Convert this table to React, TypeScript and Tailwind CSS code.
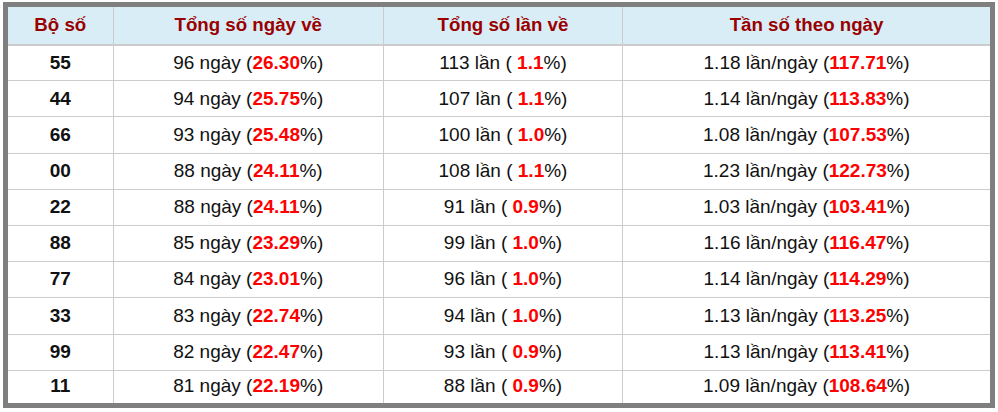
const rows = [
  { so: "55", ngay: "96", pctNgay: "26.30", lan: "113", pctLan: "1.1", tan: "1.18", pctTan: "117.71" },
  { so: "44", ngay: "94", pctNgay: "25.75", lan: "107", pctLan: "1.1", tan: "1.14", pctTan: "113.83" },
  { so: "66", ngay: "93", pctNgay: "25.48", lan: "100", pctLan: "1.0", tan: "1.08", pctTan: "107.53" },
  { so: "00", ngay: "88", pctNgay: "24.11", lan: "108", pctLan: "1.1", tan: "1.23", pctTan: "122.73" },
  { so: "22", ngay: "88", pctNgay: "24.11", lan: "91", pctLan: "0.9", tan: "1.03", pctTan: "103.41" },
  { so: "88", ngay: "85", pctNgay: "23.29", lan: "99", pctLan: "1.0", tan: "1.16", pctTan: "116.47" },
  { so: "77", ngay: "84", pctNgay: "23.01", lan: "96", pctLan: "1.0", tan: "1.14", pctTan: "114.29" },
  { so: "33", ngay: "83", pctNgay: "22.74", lan: "94", pctLan: "1.0", tan: "1.13", pctTan: "113.25" },
  { so: "99", ngay: "82", pctNgay: "22.47", lan: "93", pctLan: "0.9", tan: "1.13", pctTan: "113.41" },
  { so: "11", ngay: "81", pctNgay: "22.19", lan: "88", pctLan: "0.9", tan: "1.09", pctTan: "108.64" },
];

const Red = ({ children }: { children: React.ReactNode }) => (
  <span className="font-bold text-[#ff0000]">{children}</span>
);

export default function App() {
  return (
    <div className="w-[998px] h-[412px] bg-white pt-[2px] pl-[3px] font-['Liberation_Sans',Arial,sans-serif]">
      <table className="w-[992px] table-fixed border-collapse border-[5px] border-[#7f7f7f] text-center">
        <colgroup>
          <col className="w-[107px]" />
          <col className="w-[269px]" />
          <col className="w-[238px]" />
          <col className="w-[368px]" />
        </colgroup>
        <thead>
          <tr className="h-[40px] bg-[#d9edf7] text-[18.7px] font-bold text-[#990000]">
            <th className="border-b-2 border-r border-[#cccccc]">Bộ số</th>
            <th className="border-b-2 border-r border-[#cccccc]">Tổng số ngày về</th>
            <th className="border-b-2 border-r border-[#cccccc]">Tổng số lần về</th>
            <th className="border-b-2 border-[#cccccc]">Tần số theo ngày</th>
          </tr>
        </thead>
        <tbody className="text-[19px] text-[#111111]">
          {rows.map((r, i) => (
            <tr key={r.so} className={i < rows.length - 1 ? "h-[36.2px] border-b border-[#cccccc]" : "h-[35px]"}>
              <td className="border-r border-[#cccccc] font-bold">{r.so}</td>
              <td className="border-r border-[#cccccc]">
                {r.ngay} ngày (<Red>{r.pctNgay}</Red>%)
              </td>
              <td className="border-r border-[#cccccc]">
                {r.lan} lần ( <Red>{r.pctLan}</Red>%)
              </td>
              <td>
                {r.tan} lần/ngày (<Red>{r.pctTan}</Red>%)
              </td>
            </tr>
          ))}
        </tbody>
      </table>
    </div>
  );
}
